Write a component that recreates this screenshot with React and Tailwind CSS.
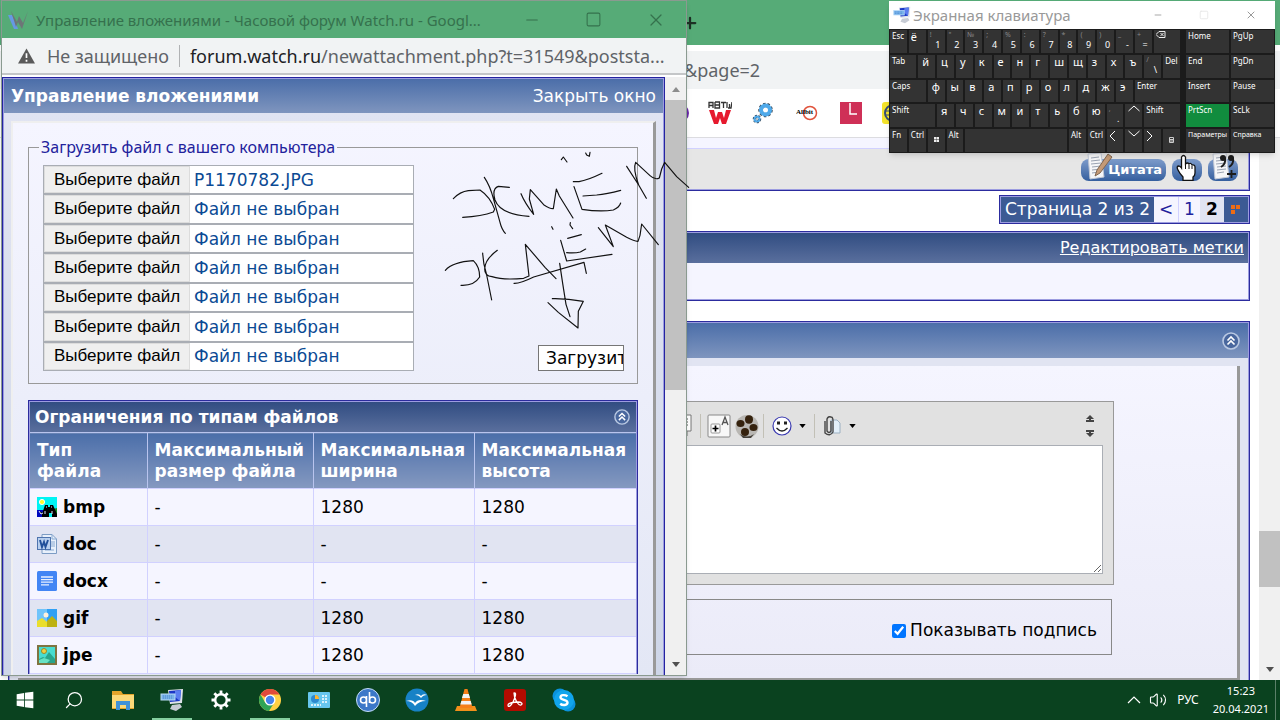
import { Minus, Plus, Search, Square, Volume2, X } from 'lucide-react';

const keyboardRows = [
    [
        { label: 'Esc', span: 'col-span-2' },
        { letter: 'ё', span: 'col-span-2', flush: true },
        { top: '!', bottom: '1', span: 'col-span-2' },
        { top: '"', bottom: '2', span: 'col-span-2' },
        { top: '№', bottom: '3', span: 'col-span-2' },
        { top: ';', bottom: '4', span: 'col-span-2' },
        { top: '%', bottom: '5', span: 'col-span-2' },
        { top: ':', bottom: '6', span: 'col-span-2' },
        { top: '?', bottom: '7', span: 'col-span-2' },
        { top: '*', bottom: '8', span: 'col-span-2' },
        { top: '(', bottom: '9', span: 'col-span-2' },
        { top: ')', bottom: '0', span: 'col-span-2' },
        { top: '_', bottom: '-', span: 'col-span-2' },
        { top: '+', bottom: '=', span: 'col-span-2' },
        { icon: 'backspace', span: 'col-span-3' },
    ],
    [
        { label: 'Tab', span: 'col-span-3' },
        ...'йцукенгшщзхъ'.split('').map((letter) => ({ letter, span: 'col-span-2' })),
        { top: '/', bottom: '\\', span: 'col-span-2' },
        { label: 'Del', span: 'col-span-2' },
    ],
    [
        { label: 'Caps', span: 'col-span-4' },
        ...'фывапролджэ'.split('').map((letter) => ({ letter, span: 'col-span-2' })),
        { label: 'Enter', span: 'col-span-5' },
    ],
    [
        { label: 'Shift', span: 'col-span-5' },
        ...'ячсмитьбю'.split('').map((letter) => ({ letter, span: 'col-span-2' })),
        { top: ',', bottom: '.', span: 'col-span-2' },
        { icon: 'up', span: 'col-span-2' },
        { label: 'Shift', span: 'col-span-4' },
    ],
    [
        { label: 'Fn', span: 'col-span-2' },
        { label: 'Ctrl', span: 'col-span-2' },
        { icon: 'win', span: 'col-span-2' },
        { label: 'Alt', span: 'col-span-2' },
        { label: '', span: 'col-span-11' },
        { label: 'Alt', span: 'col-span-2' },
        { label: 'Ctrl', span: 'col-span-2' },
        { icon: 'left', span: 'col-span-2' },
        { icon: 'down', span: 'col-span-2' },
        { icon: 'right', span: 'col-span-2' },
        { icon: 'menu', span: 'col-span-2' },
    ],
];

const sideKeys = ['Home', 'PgUp', 'End', 'PgDn', 'Insert', 'Pause', 'PrtScn', 'ScLk', 'Параметры', 'Справка'];

const uploads = ['P1170782.JPG', ...Array(6).fill('Файл не выбран')];

const fileTypes = [
    { ext: 'bmp', width: '1280', height: '1280' },
    { ext: 'doc', width: '-', height: '-' },
    { ext: 'docx', width: '-', height: '-' },
    { ext: 'gif', width: '1280', height: '1280' },
    { ext: 'jpe', width: '1280', height: '1280' },
];

const FileIcon = ({ type }) => {
    if (type === 'bmp') {
        return (
            <svg viewBox="0 0 20 20" className="size-5 shrink-0">
                <rect width="20" height="20" fill="#00f4f4" />
                <path d="M0 13h7l2 7H0z" fill="#0008c0" />
                <path d="M16 12l4-1v9h-4z" fill="#138a20" />
                <circle cx="5" cy="5" r="2.6" fill="#ffff30" stroke="#fff" />
                <path d="M5 20v-3l3-9h3v2h2V8h3l4 9v3h-5v-4h-3v4z" fill="#000" />
                <path d="M8 14v3M15 14v3M9 10h1M14 10h1M2 14l2 3 2-1" stroke="#dfe3ff" />
            </svg>
        );
    }
    if (type === 'doc') {
        return (
            <svg viewBox="0 0 20 20" className="size-5 shrink-0">
                <path d="M5 .5h10l4.500 4.500v14.500H5z" fill="#e8f0fb" stroke="#7c9cc4" />
                <path d="M15 .5V5h4.500M14 8h4M14 10h4M14 12h4M8 16h9" fill="none" stroke="#8aaad2" />
                <rect x=".5" y="3.500" width="13" height="12" fill="#b8cfee" stroke="#4e74ae" />
                <path d="M3 6l2 7 2-5 1.500 5L11 6" fill="none" stroke="#21509a" strokeWidth="1.900" />
            </svg>
        );
    }
    if (type === 'docx') {
        return (
            <svg viewBox="0 0 20 20" className="size-5 shrink-0">
                <rect width="20" height="20" rx="1.500" fill="#4285f4" />
                <path d="M4 6h12M4 8.600h12M4 11.200h12M4 13.800h8" stroke="#e8f0ff" strokeWidth="1.300" />
            </svg>
        );
    }
    if (type === 'gif') {
        return (
            <svg viewBox="0 0 20 20" className="size-5 shrink-0">
                <rect y="1" width="20" height="18" fill="#70c4fa" />
                <rect x="10" y="1" width="10" height="18" fill="#2fa0f5" />
                <circle cx="9" cy="7" r="2.500" fill="#fff0dc" />
                <path d="M0 13l5-3 5 4v5H0z" fill="#eade2c" />
                <path d="M10 13l5-5 5 5v6H10z" fill="#bdb211" />
            </svg>
        );
    }
    return (
        <svg viewBox="0 0 20 20" className="size-5 shrink-0">
            <rect x="1" y="1" width="18" height="18" fill="#48dcd0" stroke="#7f7440" strokeWidth="2" />
            <circle cx="7" cy="6" r="2.500" fill="#f0d040" stroke="#998a28" />
            <path d="M2 14l4-2 2 1 4-6 6 7v4H2z" fill="#28a58d" />
            <path d="M2 15l5-2 6 2-3 3H2z" fill="#68e2c4" />
        </svg>
    );
};

const CollapseIcon = ({ className }) => (
    <svg viewBox="0 0 18 18" className={className}>
        <circle cx="9" cy="9" r="8" fill="#49679e" stroke="#b9c8e2" strokeWidth="1.600" />
        <path d="M5.500 8.500L9 5l3.500 3.500M5.500 12.500L9 9l3.500 3.500" fill="none" stroke="#fff" strokeWidth="1.700" />
    </svg>
);

const MonitorIcon = ({ className }) => (
    <svg viewBox="0 0 24 24" className={className}>
        <path d="M8 2l15-1-1 14-12 1z" fill="#dfe3ea" />
        <path d="M9 3l12-1-1 11-10 1z" fill="#1a37c6" />
        <path d="M15 3l6-1-1 11-5-4z" fill="#5b7df0" />
        <path d="M12 17l8-1 2 3-6 4-6-2z" fill="#c7ccd5" />
        <rect x="1" y="6" width="14" height="6" fill="#77b1ea" stroke="#b9dbf7" />
        <path d="M3 8h10M3 10h10" stroke="#4c8acb" strokeDasharray="1 1" />
    </svg>
);

const NoteIcon = () => (
    <>
        <path d="M5 1l13-1 3 24-14 2z" fill="#f5f6f8" stroke="#c1c8d5" />
        <path d="M8 5l8-1M8 8l9-1M8 11l10-1M9 14l9-1M9 17l9-1M9 20l7-1" stroke="#9aa3b2" />
    </>
);

const PostButtons = () => (
    <div className="flex items-end gap-1.5">
        <button aria-label="Цитата" className="relative flex h-[22px] w-[85px] items-center justify-end rounded-lg bg-linear-to-b from-[#7e9ccb] to-[#355f9e] pr-1 font-['DejaVu_Sans'] text-[13px] font-bold text-white">
            <svg viewBox="0 0 30 28" className="absolute bottom-0 left-[2px] h-7 w-[30px]">
                <NoteIcon />
                <path d="M25 1l4 3-12 16-5 3 2-6z" fill="#c49a76" stroke="#80664f" />
            </svg>
            Цитата
        </button>
        <button aria-label="Быстрый ответ" className="h-[22px] w-[30px] rounded-lg bg-linear-to-b from-[#7e9ccb] to-[#355f9e]" />
        <button aria-label="Мультицитата" className="relative h-[22px] w-[30px] rounded-lg bg-linear-to-b from-[#7e9ccb] to-[#355f9e]">
            <svg viewBox="0 0 30 28" className="absolute bottom-0 left-0 h-7 w-[30px]">
                <NoteIcon />
                <circle cx="15" cy="5" r="3" fill="#1c1c1c" />
                <circle cx="23" cy="5" r="3" fill="#1c1c1c" />
                <path d="M17 5q1 6-4 9M25 5q1 6-4 9" fill="none" stroke="#1c1c1c" strokeWidth="2" />
                <path d="M19 21h9M23.500 17v8" stroke="#1c1c1c" strokeWidth="1.800" />
            </svg>
        </button>
    </div>
);

const Bookmarks = () => (
    <div className="flex h-12 items-center gap-[22px] pl-[670px]">
        <svg viewBox="0 0 22 22" className="size-[22px]"><circle cx="9" cy="11" r="10" fill="#6a28a8" /></svg>
        <svg viewBox="0 0 24 24" className="-ml-1.5 size-6">
            <path d="M1 7V1.500h4V7M1 4.500h4M7 1v6h4.500V1H7M7 4h4M13 1.500h5M15.500 1v6M19 1v6M21.500 3v3.500M24 1l-1 6h-3" fill="none" stroke="#333" strokeWidth="1.300" />
            <path d="M1 9h5l2 8 2-6h4l2 6 2-8h5l-5 14h-4l-2-6-2 6H6z" fill="#e6192e" />
        </svg>
        <svg viewBox="0 0 22 22" className="-ml-0.5 size-[22px]">
            <circle cx="13.500" cy="8" r="5" fill="none" stroke="#3c4a58" strokeWidth="4.500" strokeDasharray="2 1.500" />
            <circle cx="13.500" cy="8" r="4.500" fill="none" stroke="#4ea9ea" strokeWidth="4" />
            <circle cx="5" cy="17" r="2.500" fill="none" stroke="#3c4a58" strokeWidth="3.500" strokeDasharray="1.500 1" />
            <circle cx="5" cy="17" r="2.500" fill="none" stroke="#4ea9ea" strokeWidth="2" />
        </svg>
        <svg viewBox="0 0 22 22" className="size-[22px]">
            <circle cx="14" cy="11" r="6.500" fill="#fff" stroke="#e0533c" strokeWidth="1.500" />
            <text x="0" y="12" fontSize="7" fontWeight="700" fontFamily="Liberation Serif, serif">Allbit</text>
        </svg>
        <svg viewBox="0 0 22 22" className="size-[22px]">
            <rect width="22" height="22" fill="#cf3057" />
            <path d="M10 1v11h7" fill="none" stroke="#fff" strokeWidth="1.500" />
        </svg>
        <svg viewBox="0 0 22 22" className="-ml-0.5 size-[22px]">
            <rect width="22" height="22" rx="3" fill="#f4e32c" />
            <circle cx="11" cy="11" r="8" fill="none" stroke="#344b78" strokeWidth="2" />
            <path d="M3 9h10M3 13h10M8 4v14" stroke="#344b78" />
        </svg>
    </div>
);

const Caret = ({ className }) => (
    <svg viewBox="0 0 8 5" className={className}><path d="M0 0h8L4 5z" fill="currentColor" /></svg>
);

const EditorToolbar = () => (
    <div className="flex h-[43px] items-center pt-2 pb-1 text-black">
        <button aria-label="Цитировать" className="ml-[653px] h-6 w-6">
            <svg viewBox="0 0 24 24"><path d="M3 1h16v16h-4v5h-3l-4-5H3z" fill="#fff" stroke="#777" /><path d="M6 5h10M6 8h10M6 11h10M6 14h6" stroke="#555" /></svg>
        </button>
        <span className="ml-1 h-6 w-px bg-[#c2c0b6]" />
        <button aria-label="Размер шрифта" className="ml-1.5 size-6">
            <svg viewBox="0 0 24 24">
                <rect x="1" y="1" width="22" height="22" rx="1" fill="#f8f8f8" stroke="#888" />
                <rect x="4" y="10" width="9" height="9" rx="1" fill="#fff" stroke="#999" />
                <path d="M8.500 11.500v6M5.500 14.500h6" stroke="#000" strokeWidth="1.700" />
                <path d="M15 11l3-8 3 8M16 8.500h4" fill="none" stroke="#555" strokeWidth="1.300" />
            </svg>
        </button>
        <button aria-label="Видео" className="ml-1 size-6">
            <svg viewBox="0 0 24 24">
                <circle cx="12" cy="12.500" r="11.500" fill="#b9b7b3" />
                <path d="M5 20q7 5 14 0l-3 4H8z" fill="#44403a" />
                <g fill="#35220e">
                    <ellipse cx="14" cy="5.500" rx="4" ry="4.200" /><ellipse cx="5.500" cy="9.500" rx="4" ry="3.500" />
                    <ellipse cx="18.500" cy="13.500" rx="4" ry="3.500" /><ellipse cx="10" cy="18" rx="4" ry="4" />
                </g>
            </svg>
        </button>
        <span className="ml-1 h-6 w-px bg-[#c2c0b6]" />
        <button aria-label="Смайлы" className="ml-2 flex items-center gap-[7px]">
            <svg viewBox="0 0 20 20" className="size-5">
                <circle cx="10" cy="10" r="9" fill="#fff" stroke="#3a3ab0" strokeWidth="1.200" />
                <path d="M5 5.500h3v3H5zM12 5.500h3v3h-3z" fill="#222" />
                <path d="M4.500 12q5.500 6 11 0" fill="none" stroke="#222" strokeWidth="1.300" />
            </svg>
            <Caret className="h-1 w-[7px]" />
        </button>
        <span className="ml-2 h-6 w-px bg-[#c2c0b6]" />
        <button aria-label="Вложения" className="ml-2 flex items-center gap-2">
            <svg viewBox="0 0 18 22" className="h-[22px] w-[18px]">
                <path d="M8 5h6l3 3v10H8z" fill="#e2effa" stroke="#9cb0c2" />
                <path d="M8 6v10q-2 3-4 0V4q1-3 4-2 2 0 2 4v11q-3 5-8 1V6" fill="none" stroke="#444" strokeWidth="1.400" />
            </svg>
            <Caret className="h-1 w-[7px]" />
        </button>
        <button aria-label="Размер редактора" className="mr-[9px] ml-auto">
            <svg viewBox="0 0 8 24" className="h-6 w-2" fill="#444">
                <path d="M4 1L0 5h3v1H0v2h8V6H5V5h3zM4 23l-4-4h3v-1H0v-2h8v2H5v1h3z" />
            </svg>
        </button>
    </div>
);

const ForumWindow = () => (
    <section className="flex h-full flex-col bg-white">
        <div className="flex h-[45px] shrink-0 items-center bg-[#56ab77] pl-[681px]">
            <Plus className="size-[18px] text-[#1d3025]" strokeWidth={3} />
        </div>
        <div className="mt-1.5 flex h-[38px] shrink-0 items-center bg-[#f1f3f4] pl-[684px] font-['Noto_Sans'] text-[18px] text-[#5f6368]">&amp;page=2</div>
        <div className="shrink-0 border-b border-[#dcdce0]"><Bookmarks /></div>
        <div className="flex min-h-0 flex-1">
            <main className="flex min-w-0 flex-1 flex-col pr-[9px] pl-2">
                <div className="flex h-[53px] shrink-0 flex-col border-x border-b border-[#2c2c9e] bg-[#9c9ce0] px-px pb-px">
                    <div className="h-2.5 bg-[#f5f5ff]" />
                    <div className="flex flex-1 items-end justify-end border-t border-[#d1d1ff] bg-[#e6e6e6] pr-2.5 pb-2">
                        <PostButtons />
                    </div>
                </div>
                <nav className="mt-1 flex h-[29px] shrink-0 items-stretch self-end border border-[#2c2c9e] bg-[#9c9ce0] p-px font-['DejaVu_Sans'] text-[17px] leading-[25px] text-white">
                    <span className="bg-[#3c5a94] px-1">Страница 2 из 2</span>
                    <a href="#prev" className="w-6 bg-[#f5f5ff] text-center text-[#22229c]">&lt;</a>
                    <a href="#1" className="w-[22px] border-l border-[#d1d1ff] bg-[#f5f5ff] text-center text-[#22229c]">1</a>
                    <span className="w-6 bg-[#e1e4f2] text-center font-bold text-black">2</span>
                    <button aria-label="Перейти" className="flex w-6 items-center justify-center bg-[#3c5a94]">
                        <svg viewBox="0 0 10 10" className="size-2.5" fill="#ef6c14"><path d="M0 0h4v4H0zM5 0h4v4H5zM0 5h4v4H0z" /></svg>
                    </button>
                </nav>
                <div className="mt-[7px] shrink-0 border border-[#2c2c9e] bg-[#9c9ce0] p-px">
                    <div className="flex h-[30px] items-center justify-end bg-linear-to-b from-[#314d82] to-[#5a6f9d] pr-1">
                        <a href="#tags" className="font-['DejaVu_Sans'] text-[16px] leading-6 text-white underline">Редактировать метки</a>
                    </div>
                    <div className="h-9 bg-[#f5f5ff]" />
                </div>
                <div className="mt-5 flex min-h-0 flex-1 flex-col border border-b-0 border-[#2c2c9e] bg-[#9c9ce0] px-px pt-px">
                    <div className="flex h-[35px] shrink-0 items-center justify-end bg-linear-to-b from-[#4b6ea9] to-[#7f95be] pr-2">
                        <button aria-label="Свернуть"><CollapseIcon className="size-[18px]" /></button>
                    </div>
                    <div className="flex min-h-0 flex-1 flex-col bg-[#e1e4f2] px-2 pt-2">
                        <div className="flex-1 border-r-[3px] border-b-2 border-[#999] bg-linear-to-b from-[#f5f5ff] to-[#ebebf8] pr-[123px]">
                            <div className="mt-[35px] border border-[#999] bg-[#e1e1e1] pr-2.5 pb-2.5">
                                <EditorToolbar />
                                <textarea aria-label="Сообщение" className="block h-[129px] w-full resize border border-[#aaaeb5] bg-white" />
                            </div>
                            <div className="mt-3.5 mr-0.5 flex h-14 items-center justify-end border border-[#888] pt-2 pr-3.5">
                                <label className="flex items-center gap-1 font-['DejaVu_Sans'] text-[17px] text-black">
                                    <input type="checkbox" defaultChecked className="size-3.5 accent-[#0075ff]" />
                                    Показывать подпись
                                </label>
                            </div>
                        </div>
                    </div>
                </div>
            </main>
            <div className="flex w-[21px] flex-col items-center bg-[#f0f0f0]">
                <div className="mt-[393px] h-14 w-full bg-[#c1c1c1]" />
                <Caret className="mt-auto mb-2 h-[5px] w-2.5 text-[#505050]" />
            </div>
        </div>
    </section>
);

const UploadFieldset = () => (
    <fieldset className="relative mx-[15px] border border-[#999] px-3.5 pb-3">
        <legend className="-ml-1 px-0.5 font-['Noto_Sans'] text-[16px] leading-6 text-[#22229c]">Загрузить файл с вашего компьютера</legend>
        <div className="mt-1.5 grid h-[206px] w-[370px] grid-rows-7">
            {uploads.map((name, i) => (
                <div key={i} className="flex min-h-0 border border-[#a9adb4] bg-white">
                    <button className="w-[146px] shrink-0 border border-[#dcdcdc] bg-[#efefef] font-['Liberation_Sans'] text-[17px] leading-6 text-black">Выберите файл</button>
                    <input
                        readOnly
                        aria-label={`Файл ${i + 1}`}
                        value={name}
                        className="min-w-0 flex-1 pl-1 font-['DejaVu_Sans'] text-[17px] leading-6 text-[#0b4a94] outline-none"
                    />
                </div>
            ))}
        </div>
        <button className="absolute right-[13px] bottom-3 h-[26px] w-[86px] overflow-hidden border border-[#767676] bg-white pl-[7px] text-left font-['DejaVu_Sans'] text-[17px] leading-6 whitespace-nowrap text-black">Загрузить</button>
    </fieldset>
);

const LimitsTable = () => (
    <div className="mx-[15px] mt-4 border border-b-0 border-[#2c2c9e] bg-[#9c9ce0] px-px pt-px font-['DejaVu_Sans'] text-[17px] leading-[21px]">
        <div className="flex h-[30px] items-center justify-between bg-linear-to-b from-[#314d82] to-[#5a6f9d] pr-1.5 pl-[5px] font-bold text-white">
            Ограничения по типам файлов
            <button aria-label="Свернуть" className="flex"><CollapseIcon className="size-4" /></button>
        </div>
        <table className="w-full table-fixed border-collapse text-left">
            <thead>
                <tr className="h-14 text-white">
                    <th className="w-[117px] border-t border-r border-[#b9c4ee] bg-linear-to-b from-[#4b6ea9] to-[#8599c0] pl-[7px]">Тип<br />файла</th>
                    <th className="w-[166px] border-t border-r border-[#b9c4ee] bg-linear-to-b from-[#4b6ea9] to-[#8599c0] pl-[7px]">Максимальный размер файла</th>
                    <th className="w-[161px] border-t border-r border-[#b9c4ee] bg-linear-to-b from-[#4b6ea9] to-[#8599c0] pl-[7px]">Максимальная ширина</th>
                    <th className="border-t border-[#b9c4ee] bg-linear-to-b from-[#4b6ea9] to-[#8599c0] pl-[7px]">Максимальная высота</th>
                </tr>
            </thead>
            <tbody>
                {fileTypes.map((row) => (
                    <tr key={row.ext} className="h-[37px] bg-[#f5f5ff] text-black even:bg-[#e1e4f2]">
                        <td className="border border-l-0 border-[#d1d1ff] pl-[7px] font-bold">
                            <div className="flex items-center gap-1.5"><FileIcon type={row.ext} />{row.ext}</div>
                        </td>
                        <td className="border border-[#d1d1ff] pl-[7px]">-</td>
                        <td className="border border-[#d1d1ff] pl-[7px]">{row.width}</td>
                        <td className="border border-r-0 border-[#d1d1ff] pl-[7px]">{row.height}</td>
                    </tr>
                ))}
            </tbody>
        </table>
    </div>
);

const AttachmentsWindow = () => (
    <section className="absolute top-0 bottom-1 left-px flex w-[686px] flex-col border border-[#8a9a90] bg-white shadow-md">
        <div className="flex h-[37px] shrink-0 items-center bg-[#56ab77] pl-1.5 text-[#35714d]">
            <svg viewBox="0 0 20 20" className="size-5 shrink-0">
                <path d="M0 5h4l4 8 2 6H6z" fill="#6699e4" />
                <path d="M3 1l6 11 2-6 4 7 5-12-6 18-4-7-2 5z" fill="#6d7577" />
            </svg>
            <h1 className="min-w-0 flex-1 truncate pl-2 font-['Noto_Sans'] text-[15px] leading-6">Управление вложениями - Часовой форум Watch.ru - Googl...</h1>
            <div className="flex items-center gap-11 pr-5">
                <button aria-label="Свернуть окно"><Minus className="size-[18px]" strokeWidth={1.5} /></button>
                <button aria-label="Развернуть окно"><Square className="size-[17px]" strokeWidth={1.5} /></button>
                <button aria-label="Закрыть"><X className="size-5" strokeWidth={1.5} /></button>
            </div>
        </div>
        <div className="flex h-[37px] shrink-0 items-center border-b-2 border-[#c4c6c8] bg-[#f1f3f4] pl-4 font-['Noto_Sans'] text-[18px] leading-6 text-[#5f6368]">
            <svg viewBox="0 0 18 16" className="h-4 w-[17px] shrink-0">
                <path d="M9 0l9 16H0z" fill="#5a5a5a" />
                <path d="M9 5v5M9 12v2" stroke="#fff" strokeWidth="1.800" />
            </svg>
            <span className="pl-3">Не защищено</span>
            <span className="mx-2.5 h-[22px] w-px bg-[#b0b2b4]" />
            <span className="min-w-0 truncate"><span className="text-[#202124]">forum.watch.ru</span>/newattachment.php?t=31549&amp;poststa...</span>
        </div>
        <div className="flex min-h-0 flex-1 pt-0.5">
            <div className="flex min-w-0 flex-1 flex-col overflow-hidden border-x border-t border-[#2424a0] bg-[#9c9ce0] px-px pt-px">
                <div className="flex h-[34px] shrink-0 items-center justify-between bg-linear-to-b from-[#4b6ea9] to-[#7f95be] px-[7px] font-['DejaVu_Sans'] text-[17px] leading-6 text-white">
                    <h2 className="font-bold">Управление вложениями</h2>
                    <a href="#close">Закрыть окно</a>
                </div>
                <div className="flex min-h-0 flex-1 flex-col bg-linear-to-b from-[#e1e4f2] to-[#ced6e8] px-[7px] pt-2">
                    <div className="min-h-0 flex-1 border-t-2 border-r-[3px] border-l-2 border-t-[#efefef] border-r-[#999] border-l-[#efefef] bg-linear-to-b from-[#f5f5ff] to-[#e3e7f5] pt-3">
                        <UploadFieldset />
                        <LimitsTable />
                    </div>
                </div>
            </div>
            <div className="flex w-[21px] shrink-0 flex-col items-center bg-[#f0f0f0]">
                <Caret className="mt-2.5 mb-2 h-[5px] w-2.5 rotate-180 text-[#8c8c8c]" />
                <div className="h-[290px] w-full shrink-0 bg-[#c1c1c1]" />
                <Caret className="mt-auto mb-2 h-[5px] w-2.5 text-[#505050]" />
            </div>
        </div>
    </section>
);

// Freehand strokes over the upload form
const Ink = () => (
    <svg viewBox="0 0 900 780" className="pointer-events-none absolute top-[140px] left-[400px] h-[260px] w-[300px]" fill="none" stroke="#111" strokeWidth="3.500" strokeLinecap="round" strokeLinejoin="round">
        <path d="M160 176Q180 155 205 152L240 150Q270 170 284 208L280 216Q245 229 188 232" />
        <path d="M253 112Q270 137 280 175L300 247Q305 268 316 280M328 142L295 139Q275 146 285 180Q300 223 387 229" />
        <path d="M363 161Q375 190 401 223L388 177L391 149L431 194Q450 207 460 206L469 147L478 168L519 234" />
        <path d="M520 125H537Q563 121 606 100M522 140L546 208Q600 216 640 210Q658 202 662 189M549 168L590 165Q620 162 662 151" />
        <path d="M484 59L490 51L501 66M557 39L560 45L568 49L570 37M680 79L716 135L739 175M716 135Q698 87 707 67L750 107Q765 121 778 114L785 87L794 67L830 110L866 142" />
        <path d="M136 391Q158 366 220 362Q239 380 239 411Q222 438 183 436M248 339Q249 370 260 405L275 480M292 331Q254 359 254 387Q254 408 276 410Q310 421 371 415L387 408L376 313L435 382L468 416" />
        <path d="M342 430Q360 431 401 411L552 367L559 400M482 301L500 363L636 343M503 295L544 284M500 338Q525 340 541 336L557 327" />
        <path d="M455 260L459 268M511 248L510 255L518 266M595 263L640 320L616 255L680 292Q705 305 714 304L720 286L725 252L775 314" />
        <path d="M479 370L488 430L498 493L510 530M457 476Q500 475 550 484L535 514L534 564L475 517L444 488" />
    </svg>
);

const KeyIcon = ({ name }) => {
    if (name === 'up') return <svg viewBox="0 0 12 8" className="mx-auto mt-px h-2 w-3" fill="none" stroke="#fff"><path d="M.5 6L6 1l5.500 5" /></svg>;
    if (name === 'down') return <svg viewBox="0 0 12 8" className="mx-auto mt-px h-2 w-3" fill="none" stroke="#fff"><path d="M.5 1L6 6l5.500-5" /></svg>;
    if (name === 'left') return <svg viewBox="0 0 8 12" className="mt-px ml-0.5 h-3 w-2" fill="none" stroke="#fff"><path d="M6 1L1 6l5 5" /></svg>;
    if (name === 'right') return <svg viewBox="0 0 8 12" className="mt-px ml-0.5 h-3 w-2" fill="none" stroke="#fff"><path d="M1 1l5 5-5 5" /></svg>;
    if (name === 'backspace') {
        return <svg viewBox="0 0 10 7" className="mt-px ml-0.5 h-[7px] w-2.5" fill="none" stroke="#eee"><path d="M3 .5h6v6H3l-3-3zM4.500 2l3 3M7.500 2l-3 3" /></svg>;
    }
    if (name === 'win') {
        return <svg viewBox="0 0 5 5" className="mx-auto mt-2 size-[5px]" fill="#eee"><path d="M0 0h2.300v2.300H0zM2.700 0H5v2.300H2.700zM0 2.700h2.300V5H0zM2.700 2.700H5V5H2.700z" /></svg>;
    }
    return <svg viewBox="0 0 5 6" className="mx-auto mt-2 h-1.5 w-[5px]" fill="none" stroke="#ccc"><path d="M.5 .5h4v5h-4zM1 2.500h3M1 4h3" /></svg>;
};

const Key = ({ item }) => (
    <button className={`${item.span} flex min-h-0 min-w-0 flex-col overflow-hidden bg-[#333] text-left text-white`}>
        {item.label && <span className="pl-0.5 text-[8px] leading-3">{item.label}</span>}
        {item.letter && <span className={item.flush ? 'pl-0.5 text-[11px] leading-[14px]' : 'pl-1 text-[11px] leading-[14px]'}>{item.letter}</span>}
        {item.top && <span className="pl-0.5 text-[7px] leading-[10px] text-[#888]">{item.top}</span>}
        {item.bottom && <span className="w-full pr-1 text-right text-[9px] leading-[10px]">{item.bottom}</span>}
        {item.icon && <KeyIcon name={item.icon} />}
    </button>
);

const ScreenKeyboard = () => (
    <section className="absolute top-px right-[5px] w-[386px] bg-[#1b1b1b] font-['Noto_Sans'] shadow-md">
        <div className="flex h-7 items-center bg-white pr-[18px] pl-1 text-[#999]">
            <MonitorIcon className="size-[18px]" />
            <h2 className="flex-1 pl-0.5 text-[15px] leading-5">Экранная клавиатура</h2>
            <div className="flex items-center gap-9">
                <button aria-label="Свернуть клавиатуру"><Minus className="size-2.5" /></button>
                <button aria-label="Развернуть клавиатуру"><Square className="size-2.5 text-[#e6e6e6]" /></button>
                <button aria-label="Закрыть клавиатуру"><X className="size-3" /></button>
            </div>
        </div>
        <div className="flex h-[124px] gap-1.5 p-px">
            <div className="grid flex-1 grid-rows-5 gap-0.5">
                {keyboardRows.map((row, i) => (
                    <div key={i} className="grid min-h-0 grid-cols-[repeat(31,minmax(0,1fr))] gap-0.5">
                        {row.map((item, j) => <Key key={j} item={item} />)}
                    </div>
                ))}
            </div>
            <div className="grid w-[88px] grid-cols-2 grid-rows-5 gap-0.5">
                {sideKeys.map((name) => (
                    <button
                        key={name}
                        className={name === 'PrtScn'
                            ? 'flex min-h-0 min-w-0 bg-[#118c3e] pl-0.5 text-[8px] leading-3 text-white'
                            : 'flex min-h-0 min-w-0 bg-[#333] pl-0.5 text-[8px] leading-3 text-white'}
                    >
                        <span className={name === 'Параметры' || name === 'Справка' ? 'text-[7px]' : ''}>{name}</span>
                    </button>
                ))}
            </div>
        </div>
    </section>
);

const HandCursor = () => (
    <svg viewBox="0 0 20 27" className="pointer-events-none absolute top-[154px] right-[84px] h-[27px] w-5">
        <path d="M5.500 3q2-3 4 0v7q2-2 3.500 0 2-1.500 3 1 3-.5 3 2v6q0 3-2 4v3.500H7V23q-3-3-5-7-2-4 1-4 1.500.5 2.500 2z" fill="#fff" stroke="#111" strokeWidth="1.300" />
        <path d="M9.500 10v5M13 11v4M16 12v3" stroke="#111" />
    </svg>
);

const taskbarApps = [
    { name: 'Пуск', art: <path d="M2 5l9-1.500v8H2zM12 3.300L22 2v9.500H12zM2 12.500h9v8L2 19zM12 12.500h10V22l-10-1.400z" fill="#fff" /> },
    { name: 'Поиск', icon: Search },
    {
        name: 'Проводник',
        art: <><path d="M1 3h9l2 3h11v15H1z" fill="#e3a52b" /><path d="M1 7h22v13H1z" fill="#fbd978" /><path d="M5 22v-9h14v9h-4v-5H9v5z" fill="#3f92d8" /></>,
    },
    { name: 'Экранная клавиатура', monitor: true, bar: 'bg-[#84cf9f]' },
    {
        name: 'Параметры',
        art: (
            <g fill="none" stroke="#fff">
                <circle cx="12" cy="12" r="5.800" strokeWidth="2.400" />
                <path d="M12 2.500v4M12 17.500v4M2.500 12h4M17.500 12h4M5.300 5.300l2.800 2.800M15.900 15.900l2.800 2.800M5.300 18.700l2.800-2.800M15.900 8.100l2.800-2.800" strokeWidth="2.800" />
            </g>
        ),
    },
    {
        name: 'Chrome',
        bar: 'bg-[#84cf9f]',
        art: (
            <>
                <circle cx="12" cy="12" r="11" fill="#ffd043" />
                <path d="M12 12L2.500 6.500A11 11 0 0 1 21.500 6.500H12z" fill="#e04a3b" />
                <path d="M12 12L7.300 14.700 2.500 6.500A11 11 0 0 0 11 23l5-8z" fill="#2fa457" />
                <circle cx="12" cy="12" r="5.500" fill="#fff" /><circle cx="12" cy="12" r="4.200" fill="#4583ec" />
            </>
        ),
    },
    {
        name: 'Панель управления',
        art: <><rect x="1" y="4" width="22" height="16" rx="1" fill="#67c6ed" /><circle cx="8" cy="11" r="4" fill="#2d89cf" /><path d="M8 11V7a4 4 0 0 1 4 4z" fill="#ffb52c" /><path d="M15 8h6M15 11h6M15 14h6M4 17h10" stroke="#fff" strokeWidth="1.500" strokeDasharray="2 1" /></>,
    },
    {
        name: 'qBittorrent',
        art: <><circle cx="12" cy="12" r="11.500" fill="#3c78c8" stroke="#c6ddf7" /><path d="M10.500 8v11M10.500 12a3 3 0 1 0-6 0 3 3 0 0 0 6 0M13.500 4v11M13.500 12a3 3 0 1 0 6 0 3 3 0 0 0-6 0" fill="none" stroke="#fff" strokeWidth="1.600" /></>,
    },
    {
        name: 'OpenOffice',
        art: <><circle cx="12" cy="12" r="11.500" fill="#1782c6" /><path d="M10 7q4-2 6 1 2-3 6-1-4 0-6 3-2-3-6-3zM1 13q7-2 9 2 3-5 11-2-7 0-11 5-3-5-9-5z" fill="#fff" /></>,
    },
    {
        name: 'VLC',
        art: <><path d="M3 18h18l2 5H1z" fill="#f2901b" /><path d="M10.500 1h3l5 19H5.500z" fill="#f57f17" /><path d="M9.200 6h5.600l1.200 4H8zM7.300 13h9.400l1 3.500H6.300z" fill="#f2f2f2" /></>,
    },
    {
        name: 'Acrobat Reader',
        art: <><rect x="1" y="1" width="22" height="22" rx="3" fill="#b30b00" /><path d="M11 5c3-1 1 5-1 9-2 4-5 6-5 3 0-2 6-3 10-3s5 2 3 3-7-5-7-12z" fill="none" stroke="#fff" strokeWidth="1.300" /></>,
    },
    {
        name: 'Skype',
        art: <><circle cx="8" cy="8" r="7.500" fill="#0a92dc" /><circle cx="16" cy="16" r="7.500" fill="#0a92dc" /><circle cx="12" cy="12" r="10" fill="#11a5ec" /><path d="M15.500 8.300C13 6.500 8.500 6.700 8.500 9.300c0 3.200 7 2 7 5.300 0 2.800-4.800 3.200-7.300 1.200" fill="none" stroke="#fff" strokeWidth="2.400" /></>,
    },
];

const Taskbar = () => (
    <footer className="flex h-10 shrink-0 items-stretch bg-[#0a421f] font-['Noto_Sans'] text-white">
        {taskbarApps.map(({ name, art, icon: Icon, monitor, bar }) => (
            <button key={name} aria-label={name} className="flex w-[49px] shrink-0 flex-col items-center">
                <span className="flex flex-1 items-center pt-0.5">
                    {Icon && <Icon className="size-5 -scale-x-100" strokeWidth={1.5} />}
                    {monitor && <MonitorIcon className="size-6" />}
                    {art && <svg viewBox="0 0 24 24" className={name === 'Пуск' ? 'size-5' : 'size-6'}>{art}</svg>}
                </span>
                <span className={`h-0.5 w-10 ${bar || ''}`} />
            </button>
        ))}
        <div className="ml-auto flex items-center pr-1">
            <button aria-label="Скрытые значки">
                <svg viewBox="0 0 14 8" className="h-2 w-3.5" fill="none" stroke="#fff" strokeWidth="1.200"><path d="M1 7l6-6 6 6" /></svg>
            </button>
            <button aria-label="Громкость" className="ml-2"><Volume2 className="size-[18px]" strokeWidth={1.5} /></button>
            <button className="ml-2.5 text-[12px]">РУС</button>
            <div className="ml-3.5 text-center text-[11px] leading-[18px]">
                <p>15:23</p>
                <p>20.04.2021</p>
            </div>
            <span className="ml-1.5 h-full w-px bg-[#5b8069]" />
        </div>
    </footer>
);

export default function App() {
    return (
        <div className="flex h-screen flex-col overflow-hidden">
            <div className="relative min-h-0 flex-1 overflow-hidden">
                <ForumWindow />
                <AttachmentsWindow />
                <Ink />
                <ScreenKeyboard />
                <HandCursor />
            </div>
            <Taskbar />
        </div>
    );
}
